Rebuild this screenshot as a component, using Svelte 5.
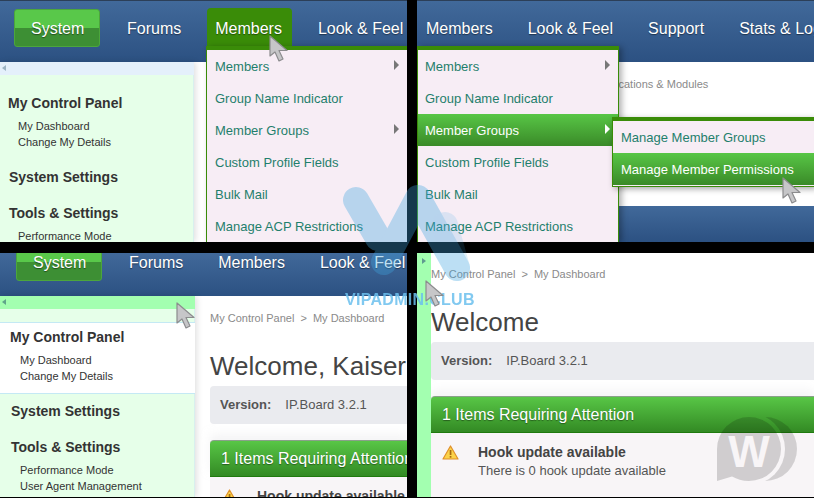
<script>
  const memberMenu = [
    { label: 'Members', more: true },
    { label: 'Group Name Indicator' },
    { label: 'Member Groups', more: true },
    { label: 'Custom Profile Fields' },
    { label: 'Bulk Mail' },
    { label: 'Manage ACP Restrictions' }
  ];
  const cursors = [
    { x: 269, y: 35 },
    { x: 782, y: 177 },
    { x: 176, y: 302 },
    { x: 425, y: 280 }
  ];
</script>

{#snippet nav(items, cls = '')}
  <header class="head {cls}">
    <nav class="nav">
      {#each items as item}
        <span class="tab" class:system={item === 'System'} class:open={item === 'Members' && cls === 'tl'}>{item}</span>
      {/each}
    </nav>
  </header>
{/snippet}

{#snippet side(white)}
  <aside class="side">
    <div class="strip" class:hot={white}><i class="back"></i></div>
    <div class="sec first" class:white>
      <h4>My Control Panel</h4>
      <a href="#a">My Dashboard</a>
      <a href="#a">Change My Details</a>
    </div>
    <div class="sec plain"><h4>System Settings</h4></div>
    <div class="sec plain tools">
      <h4>Tools &amp; Settings</h4>
      <a href="#a">Performance Mode</a>
      <a href="#a">User Agent Management</a>
    </div>
  </aside>
{/snippet}

{#snippet content(title)}
  <div class="crumb">My Control Panel <b>&gt;</b> My Dashboard</div>
  <h1>{title}</h1>
  <div class="ver"><strong>Version:</strong><span>IP.Board 3.2.1</span></div>
  <div class="bar">1 Items Requiring Attention</div>
  <div class="alert">
    <svg class="warn" width="17" height="15" viewBox="0 0 17 15">
      <path d="M8.5 1 L16 14 H1 Z" fill="#fbd24a" stroke="#e0902a" stroke-width="1.2" stroke-linejoin="round" />
      <rect x="7.7" y="5" width="1.7" height="5" fill="#a86a10" />
      <rect x="7.7" y="11" width="1.7" height="1.7" fill="#a86a10" />
    </svg>
    <div>
      <div class="atitle">Hook update available</div>
      <div class="atext">There is 0 hook update available</div>
    </div>
  </div>
{/snippet}

{#snippet menu(cls, activeIdx)}
  <ul class="menu {cls}">
    {#each memberMenu as m, i}
      <li class:on={i === activeIdx}>
        {m.label}
        {#if m.more}<i class="caret"></i>{/if}
      </li>
    {/each}
  </ul>
{/snippet}

<div class="root">
  <section class="panel p-tl">
    {@render nav(['System', 'Forums', 'Members', 'Look & Feel'], 'tl')}
    <div class="body">{@render side(false)}</div>
    {@render menu('m-tl', -1)}
  </section>

  <section class="panel p-tr">
    {@render nav(['Members', 'Look & Feel', 'Support', 'Stats & Logs'], 'tr')}
    <div class="apps">Applications &amp; Modules</div>
    <div class="foot"></div>
    {@render menu('m-tr', 2)}
    <ul class="menu sub">
      <li>Manage Member Groups</li>
      <li class="on">Manage Member Permissions</li>
    </ul>
  </section>

  <section class="panel p-bl">
    {@render nav(['System', 'Forums', 'Members', 'Look & Feel'], 'bl')}
    <div class="body">
      {@render side(true)}
      <main class="main">{@render content('Welcome, Kaiser')}</main>
    </div>
  </section>

  <section class="panel p-br">
    <div class="body">
      <div class="rail"><i class="fwd"></i></div>
      <main class="main">{@render content('Welcome')}</main>
    </div>
    <svg class="wlogo" width="82" height="66" viewBox="0 0 82 66">
      <defs>
        <mask id="cres">
          <rect width="82" height="66" fill="#fff" />
          <circle cx="32" cy="32" r="36" fill="#000" />
        </mask>
      </defs>
      <circle cx="48" cy="32" r="32" fill="#000" opacity=".15" mask="url(#cres)" />
      <path d="M32 0 A32 32 0 1 1 32 64 C25 64 20 62 15 59.500 L0 64 V32 A32 32 0 0 1 32 0 Z" fill="#000" opacity=".16" />
      <text x="32" y="50" text-anchor="middle" class="wtext">W</text>
    </svg>
  </section>

  <div class="vip">
    <svg width="132" height="100" viewBox="0 0 132 100">
      <g fill="none" stroke="#3fa5e0" stroke-width="26" stroke-linecap="round" stroke-linejoin="round" opacity=".34">
        <path d="M15 16 L37 54" />
        <path d="M43 78 L77 14 L116 84" />
        <path d="M104 41 L116 84" opacity=".45" />
      </g>
    </svg>
    <div class="viptext">VIPADMIN.CLUB</div>
  </div>

  {#each cursors as c}
    <svg class="cursor" style="left:{c.x}px;top:{c.y}px" width="20" height="28" viewBox="0 0 20 28">
      <path d="M1 1 V21 L6 17 L10 26 L14 24 L10 15.500 H18 Z" fill="#c6c6c8" stroke="#8c8c8e" stroke-width="1.2" stroke-linejoin="round" />
    </svg>
  {/each}
</div>

<style>
  :global(body) { margin: 0; background: #000; }
  .root {
    position: relative;
    width: 814px;
    height: 498px;
    overflow: hidden;
    background: #000;
    display: grid;
    grid-template-columns: 407px 397px;
    grid-template-rows: 242px 244px;
    column-gap: 10px;
    row-gap: 11px;
    font-family: "Liberation Sans", Arial, sans-serif;
  }
  .panel {
    position: relative;
    overflow: hidden;
    background: #fff;
    display: flex;
    flex-direction: column;
  }

  /* header */
  .head {
    flex: none;
    height: 62px;
    box-sizing: border-box;
    padding: 8px 0 0 14px;
    background: linear-gradient(#41699a, #2c5182);
    border-top: 1px solid #2c3f58;
  }
  .head.bl { height: 43px; padding: 0 0 0 16px; border: 0; }
  .head.bl .nav { margin-top: -10px; }
  .head.tr { padding-left: 0; }
  .nav { display: flex; gap: 17px; white-space: nowrap; }
  .tab {
    height: 38px;
    line-height: 40px;
    padding: 0 9px;
    font-size: 16px;
    color: #fff;
    text-shadow: 0 1px 1px rgba(0, 0, 0, .45);
    border-radius: 4px 4px 0 0;
  }
  .tab.system {
    padding: 0 16px;
    box-sizing: border-box;
    width: 86px;
    margin-right: 1px;
    border: 1px solid #4ca63c;
    border-radius: 3px;
    line-height: 38px;
    background: linear-gradient(#59c84a 50%, #3d8f34 50%);
  }
  .tab.open { background: #3a8c08; margin-top: -1px; line-height: 42px; }
  .head.tl .tab:nth-child(3) { padding-left: 8px; padding-right: 10px; }

  /* body & sidebar */
  .body { flex: 1; min-height: 0; display: flex; }
  .side {
    flex: none;
    width: 194px;
    background: #e6ffe9;
    box-shadow: 2px 0 6px rgba(0, 0, 0, .12);
    border-right: 1px solid #d8f0ee;
    box-sizing: border-box;
  }
  .p-bl .side { width: 195px; }
  .strip { height: 13px; background: #e4f0fb; position: relative; margin-right: -1px; }
  .strip.hot { background: #a3ffb0; }
  .back {
    position: absolute;
    left: 2px;
    top: 3px;
    width: 0;
    height: 0;
    border: 3.5px solid transparent;
    border-right: 4px solid #9cb4c4;
    border-left: 0;
  }
  .strip.hot .back { border-right-color: #5fa58a; }
  .sec { padding: 9px 0 11px 9px; }
  .sec.first { margin-top: 13px; padding: 7px 0 10px 8px; }
  .p-bl .sec { padding-left: 11px; }
  .p-bl .sec.first { padding-left: 10px; }
  .sec.white {
    background: #fff;
    border-top: 1px solid #c4e9f4;
    border-bottom: 1px solid #c4e9f4;
    margin-right: -1px;
    padding-top: 6px;
    padding-bottom: 9px;
  }
  .sec.tools { padding-bottom: 0; }
  h4 {
    margin: 0 0 7px;
    font-size: 14px;
    line-height: 16px;
    font-weight: 700;
    color: #333;
  }
  .plain h4 { margin-bottom: 0; }
  .tools h4 { margin-bottom: 7px; }
  .sec a {
    display: block;
    margin-left: 10px;
    font-size: 11px;
    line-height: 16px;
    color: #333;
    text-decoration: none;
  }
  .sec.plain a { margin-left: 9px; }

  /* main */
  .main { flex: 1; min-width: 0; padding: 14px 0 0 14px; white-space: nowrap; overflow: hidden; }
  .p-bl .main { padding-left: 15px; }
  .p-br .main { padding-left: 0; padding-top: 13px; }
  .crumb { font-size: 11px; line-height: 16px; color: #8a8a8a; }
  .crumb b { font-weight: 400; margin: 0 3px; }
  h1 {
    margin: 22px 0 0;
    font-size: 26px;
    line-height: 36px;
    font-weight: 400;
    color: #444;
    height: 38px;
  }
  .ver {
    box-sizing: border-box;
    height: 38px;
    line-height: 38px;
    padding-left: 10px;
    font-size: 13px;
    color: #555;
    background: #eaebef;
    border-radius: 4px 0 0 4px;
  }
  .ver strong { margin-right: 14px; color: #555; }
  .bar {
    margin-top: 16px;
    height: 37px;
    line-height: 36px;
    box-sizing: border-box;
    padding-left: 11px;
    font-size: 16px;
    color: #fff;
    text-shadow: 0 1px 1px rgba(0, 0, 0, .4);
    background: linear-gradient(#58c646, #338a24);
    border-top: 1px solid #8aa08a;
    border-bottom: 1px solid #1f7a0e;
    border-radius: 4px 0 0 0;
    box-shadow: 0 -6px 8px rgba(235, 235, 238, .5);
  }
  .alert {
    display: flex;
    background: #f8f5f7;
    padding: 11px 0 0 11px;
    height: 60px;
  }
  .warn { flex: none; margin-right: 19px; margin-top: 1px; }
  .atitle { font-size: 14px; line-height: 16px; font-weight: 700; color: #444; }
  .atext { font-size: 13px; line-height: 21px; color: #555; }

  /* right top */
  .apps {
    flex: none;
    height: 144px;
    box-sizing: border-box;
    padding: 15px 0 0 177px;
    font-size: 11px;
    line-height: 14px;
    color: #8a8a8a;
    background: #fff;
  }
  .foot { flex: 1; background: linear-gradient(#41699a, #2c5182); }

  /* menus */
  .menu {
    position: absolute;
    margin: 0;
    padding: 0;
    list-style: none;
    background: #f7edf5;
    border-top: 4px solid #3a8c08;
    border-left: 1px solid #3a8c08;
    box-shadow: 2px 2px 6px rgba(0, 0, 0, .35);
  }
  .menu li {
    position: relative;
    height: 32px;
    line-height: 33px;
    padding-left: 8px;
    font-size: 13px;
    color: #1f7f6c;
    white-space: nowrap;
  }
  .menu li.on {
    color: #fff;
    background: linear-gradient(#58c646, #3a8a28);
  }
  .caret {
    position: absolute;
    right: 8px;
    top: 10px;
    width: 0;
    height: 0;
    border: 5px solid transparent;
    border-left: 5px solid #777;
    border-right: 0;
  }
  .on .caret { border-left-color: #fff; }
  .m-tl { left: 206px; top: 46px; width: 200px; height: 192px; }
  .m-tr { left: 0; top: 46px; width: 200px; height: 192px; border-right: 1px solid #3a8c08; }
  .m-tr li { padding-left: 7px; }
  .sub { left: 195px; top: 117px; width: 202px; height: 65px; border-bottom: 1px solid #3a8c08; }
  .m-tl, .m-tr { box-shadow: 3px 1px 6px rgba(0, 0, 0, .3); }

  /* collapsed rail */
  .rail { flex: none; width: 14px; background: #a3ffb0; position: relative; }
  .fwd {
    position: absolute;
    left: 5px;
    top: 5px;
    width: 0;
    height: 0;
    border: 3.5px solid transparent;
    border-left: 4px solid #5f9a90;
    border-right: 0;
  }

  /* overlays */
  .wlogo { position: absolute; left: 300px; top: 164px; }
  .wtext { font: 700 44px "Liberation Sans", Arial, sans-serif; fill: #f8f5f7; }
  .vip { position: absolute; left: 341px; top: 184px; width: 136px; }
  .vip svg { display: block; }
  .viptext {
    margin-top: 8px;
    padding-left: 4px;
    font-size: 16px;
    line-height: 16px;
    font-weight: 700;
    letter-spacing: .3px;
    color: #6cc0ee;
    opacity: .85;
    white-space: nowrap;
  }
  .cursor { position: absolute; }
</style>
